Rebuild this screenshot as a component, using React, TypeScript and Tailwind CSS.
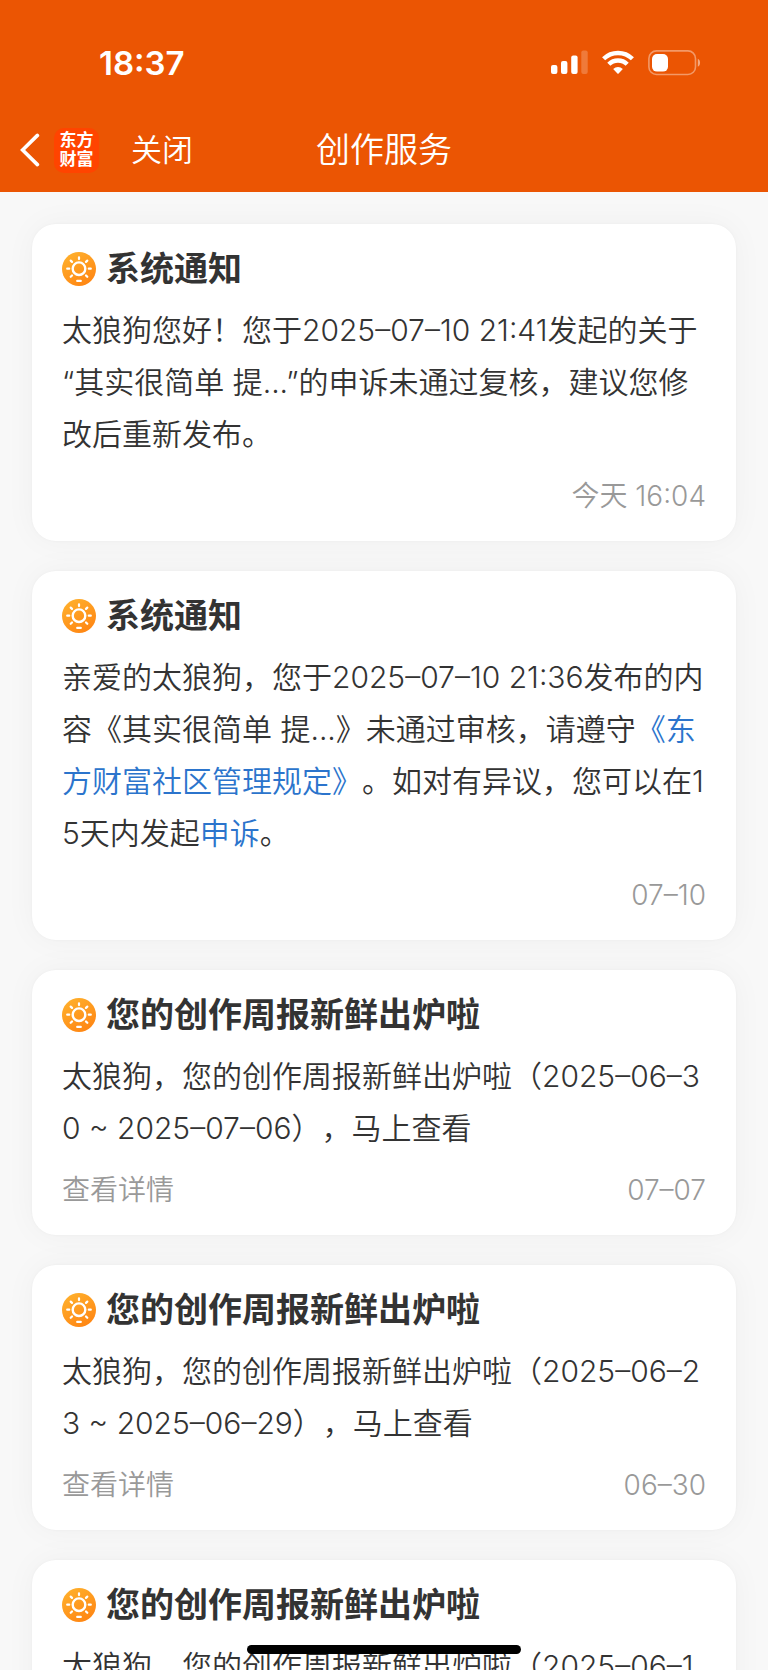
import type { ReactNode } from 'react';

type Notice = {
  title: string;
  lines: ReactNode[];
  time: string;
  hasDetail?: boolean;
};

const notices: Notice[] = [
  {
    title: '系统通知',
    lines: ['太狼狗您好！您于2025–07–10 21:41发起的关于', '“其实很简单 提...”的申诉未通过复核，建议您修', '改后重新发布。'],
    time: '今天 16:04',
  },
  {
    title: '系统通知',
    lines: [
      '亲爱的太狼狗，您于2025–07–10 21:36发布的内',
      <>容《其实很简单 提...》未通过审核，请遵守<RuleLink>《东</RuleLink></>,
      <><RuleLink>方财富社区管理规定》</RuleLink>。如对有异议，您可以在1</>,
      <>5天内发起<RuleLink>申诉</RuleLink>。</>,
    ],
    time: '07–10',
  },
  {
    title: '您的创作周报新鲜出炉啦',
    lines: ['太狼狗，您的创作周报新鲜出炉啦（2025–06–3', '0 ~ 2025–07–06），马上查看'],
    time: '07–07',
    hasDetail: true,
  },
  {
    title: '您的创作周报新鲜出炉啦',
    lines: ['太狼狗，您的创作周报新鲜出炉啦（2025–06–2', '3 ~ 2025–06–29），马上查看'],
    time: '06–30',
    hasDetail: true,
  },
  {
    title: '您的创作周报新鲜出炉啦',
    lines: ['太狼狗，您的创作周报新鲜出炉啦（2025–06–1', '6 ~ 2025–06–22），马上查看'],
    time: '06–23',
    hasDetail: true,
  },
];

function RuleLink({ children }: { children: ReactNode }) {
  return (
    <a href="#" className="text-[#2b74cc]">
      {children}
    </a>
  );
}

function StatusBar() {
  return (
    <div className="flex h-[108px] items-center justify-between pt-[18px] pr-[67px] pl-[99px]">
      <span className="text-[33px] leading-10 font-semibold">18:37</span>
      <div className="flex items-center">
        <svg width="38" height="26" viewBox="0 0 38 26" fill="#fff" className="mr-[13px]">
          <rect x="0" y="15" width="6.4" height="9" rx="2" />
          <rect x="10" y="11" width="6.4" height="13" rx="2" />
          <rect x="20.2" y="5.5" width="6.4" height="18.5" rx="2" />
          <rect x="30.3" y="0.5" width="6.4" height="23.5" rx="2" opacity="0.22" />
        </svg>
        <svg width="32" height="26" viewBox="0 0 32 26" className="mr-[14px]">
          <g fill="none" stroke="#fff" strokeWidth="4.4">
            <path d="M1.6 8.8a20.6 20.6 0 0 1 28.8 0" />
            <path d="M6.8 14.3a13 13 0 0 1 18.4 0" />
          </g>
          <path d="M11.2 19a7 7 0 0 1 9.6 0l-4.2 4.6a.9.9 0 0 1-1.2 0z" fill="#fff" />
        </svg>
        <svg width="53" height="26" viewBox="0 0 53 26">
          <rect x="0.9" y="0.9" width="46.6" height="23.6" rx="7.6" fill="none" stroke="#fff" strokeOpacity="0.4" strokeWidth="1.6" />
          <rect x="4" y="4" width="16" height="17.6" rx="5" fill="#fff" />
          <path d="M49.8 8.7c3 1.2 3 6.8 0 8z" fill="#fff" opacity="0.5" />
        </svg>
      </div>
    </div>
  );
}

function NavBar() {
  return (
    <nav className="grid h-[84px] grid-cols-[1fr_auto_1fr] items-center px-5">
      <div className="flex items-center">
        <button type="button" aria-label="返回">
          <svg width="20" height="34" viewBox="0 0 20 34" fill="none" stroke="#fff" strokeWidth="3.6" strokeLinecap="round">
            <path d="M17.4 2.4 2.6 17l14.8 14.6" strokeLinejoin="miter" />
          </svg>
        </button>
        <div className="mr-8 ml-[14px] flex size-[45px] flex-col items-center justify-center rounded-[10px] bg-[#ff4400] text-[17px] leading-[19px] font-bold">
          <span>东方</span>
          <span>财富</span>
        </div>
        <button type="button" className="text-[31px] leading-10 font-[350]">
          关闭
        </button>
      </div>
      <h1 className="text-[34px] leading-10 font-[350]">创作服务</h1>
      <span />
    </nav>
  );
}

function BulbIcon() {
  return (
    <svg width="34" height="34" viewBox="0 0 34 34" fill="none" stroke="#fff" strokeLinecap="round">
      <defs>
        <linearGradient id="bulb" x1="0.2" y1="0" x2="0.8" y2="1">
          <stop offset="0" stopColor="#ffb02c" />
          <stop offset="1" stopColor="#ff8412" />
        </linearGradient>
      </defs>
      <circle cx="17" cy="17" r="17" fill="url(#bulb)" stroke="none" />
      <circle cx="17" cy="16.7" r="6.3" strokeWidth="2.4" />
      <path
        d="M17 5.3v1.8M8.7 8.6l1.3 1.3M25.3 8.6 24 9.9M5.2 16.7h2M26.8 16.7h2M8.7 24.8l1.3-1.3M25.3 24.8 24 23.5M15.2 28.9h3.6"
        strokeWidth="2.2"
      />
    </svg>
  );
}

function NoticeCard({ notice }: { notice: Notice }) {
  return (
    <article className="rounded-3xl bg-white px-[30px] pt-5 pb-[25px] shadow-[0_0_32px_rgba(0,0,0,0.04),0_0_3px_rgba(0,0,0,0.04)]">
      <div className="mb-[10px] flex items-center gap-[10px]">
        <BulbIcon />
        <h2 className="text-[34px] leading-[50px] font-bold">{notice.title}</h2>
      </div>
      <p className="text-[30px] leading-[52px] font-[350] whitespace-nowrap">
        {notice.lines.map((line, i) => (
          <span key={i} className="block">
            {line}
          </span>
        ))}
      </p>
      <div className="mt-4 flex justify-between text-[28px] leading-10 font-[350] text-[#999]">
        {notice.hasDetail ? <a href="#">查看详情</a> : <span />}
        <time>{notice.time}</time>
      </div>
    </article>
  );
}

export default function App() {
  return (
    <div
      lang="zh-CN"
      className="flex h-screen flex-col overflow-hidden bg-[#f8f8f8] font-[Inter,'Noto_Sans_CJK_SC',sans-serif] text-[#333] [text-spacing-trim:space-all]"
    >
      <header className="shrink-0 bg-[#eb5503] text-white">
        <StatusBar />
        <NavBar />
      </header>
      <main className="flex flex-1 flex-col gap-[30px] overflow-y-auto px-8 py-8 [scrollbar-width:none]">
        {notices.map((notice, i) => (
          <NoticeCard key={i} notice={notice} />
        ))}
      </main>
      <div className="fixed bottom-4 left-1/2 h-[9px] w-[274px] -translate-x-1/2 rounded-full bg-black" />
    </div>
  );
}
